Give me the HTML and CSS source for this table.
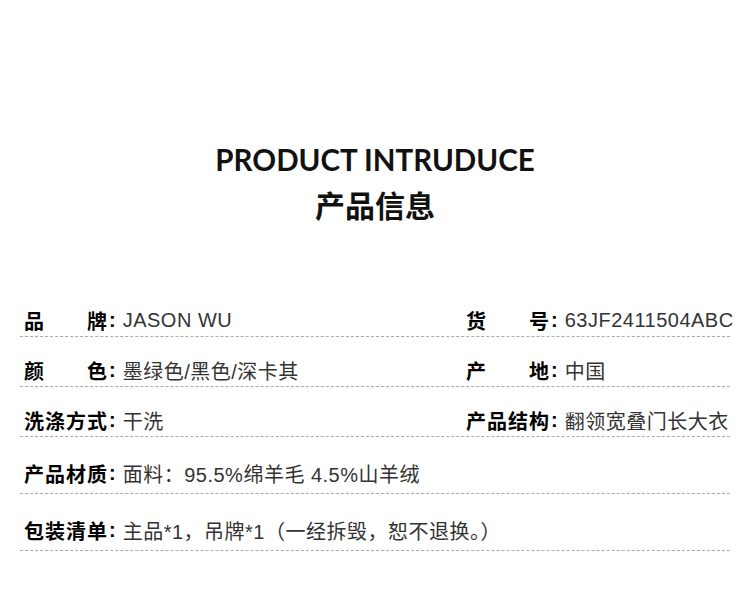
FILE: index.html
```html
<!DOCTYPE html>
<html lang="zh-CN">
<head>
  <meta charset="UTF-8" />
  <meta name="viewport" content="width=device-width, initial-scale=1.0"/>
  <title>产品信息</title>
  <link rel="stylesheet" href="styles.css">
</head>
<body>
  <div class="page">
    <div class="heading">
      <h1>PRODUCT INTRUDUCE</h1>
      <h2>产品信息</h2>
    </div>

    <div class="info">
      <div class="row pair">
        <div class="cell">
          <span class="label"><span>品</span><span>牌</span></span><span class="colon">:</span>
          <span class="value">JASON WU</span>
        </div>
        <div class="cell">
          <span class="label"><span>货</span><span>号</span></span><span class="colon">:</span>
          <span class="value">63JF2411504ABC</span>
        </div>
      </div>
      <div class="row pair">
        <div class="cell">
          <span class="label"><span>颜</span><span>色</span></span><span class="colon">:</span>
          <span class="value">墨绿色/黑色/深卡其</span>
        </div>
        <div class="cell">
          <span class="label"><span>产</span><span>地</span></span><span class="colon">:</span>
          <span class="value">中国</span>
        </div>
      </div>
      <div class="row pair">
        <div class="cell">
          <span class="label"><span>洗涤方式</span></span><span class="colon">:</span>
          <span class="value">干洗</span>
        </div>
        <div class="cell">
          <span class="label"><span>产品结构</span></span><span class="colon">:</span>
          <span class="value">翻领宽叠门长大衣</span>
        </div>
      </div>
      <div class="row wide">
        <div class="cell">
          <span class="label"><span>产品材质</span></span><span class="colon">:</span>
          <span class="value">面料：95.5%绵羊毛 4.5%山羊绒</span>
        </div>
      </div>
      <div class="row wide">
        <div class="cell">
          <span class="label"><span>包装清单</span></span><span class="colon">:</span>
          <span class="value">主品*1，吊牌*1（一经拆毁，恕不退换。）</span>
        </div>
      </div>
    </div>
  </div>
</body>
</html>
```

FILE: styles.css
```css
* {
  box-sizing: border-box;
}

body {
  margin: 0;
  background: #fff;
  color: #111;
  font-family: "Liberation Sans", "Noto Sans CJK SC", sans-serif;
}

.page {
  width: 750px;
  padding: 0 20px;
}

.heading {
  padding-top: 142px;
  text-align: center;
}

.heading h1 {
  margin: 0;
  font-family: "Lato", "Noto Sans", sans-serif;
  font-size: 29.5px;
  font-weight: 700;
  line-height: 36px;
}

.heading h2 {
  margin: 8px 0 0;
  font-family: "Noto Sans CJK SC", sans-serif;
  font-size: 30px;
  font-weight: 700;
  line-height: 36px;
}

.info {
  margin-top: 65px;
}

.row {
  display: grid;
  grid-template-columns: 442px 1fr;
  border-bottom: 1px dashed #aaa;
}

.row.pair {
  padding: 18px 0 1px;
}

.row.wide {
  padding: 21px 0 5px;
}

.cell {
  display: flex;
  align-items: center;
  height: 30px;
  padding-left: 4px;
  white-space: nowrap;
}

.label {
  display: flex;
  justify-content: space-between;
  width: 84px;
  font-family: "Noto Sans CJK SC", sans-serif;
  font-size: 20px;
  font-weight: 700;
  letter-spacing: 1px;
  color: #000;
}

.colon {
  margin: 0 7px 0 1px;
  font-size: 20px;
  font-weight: 700;
  color: #000;
}

.value {
  font-size: 20px;
  letter-spacing: 0.5px;
  color: #333;
}
```
